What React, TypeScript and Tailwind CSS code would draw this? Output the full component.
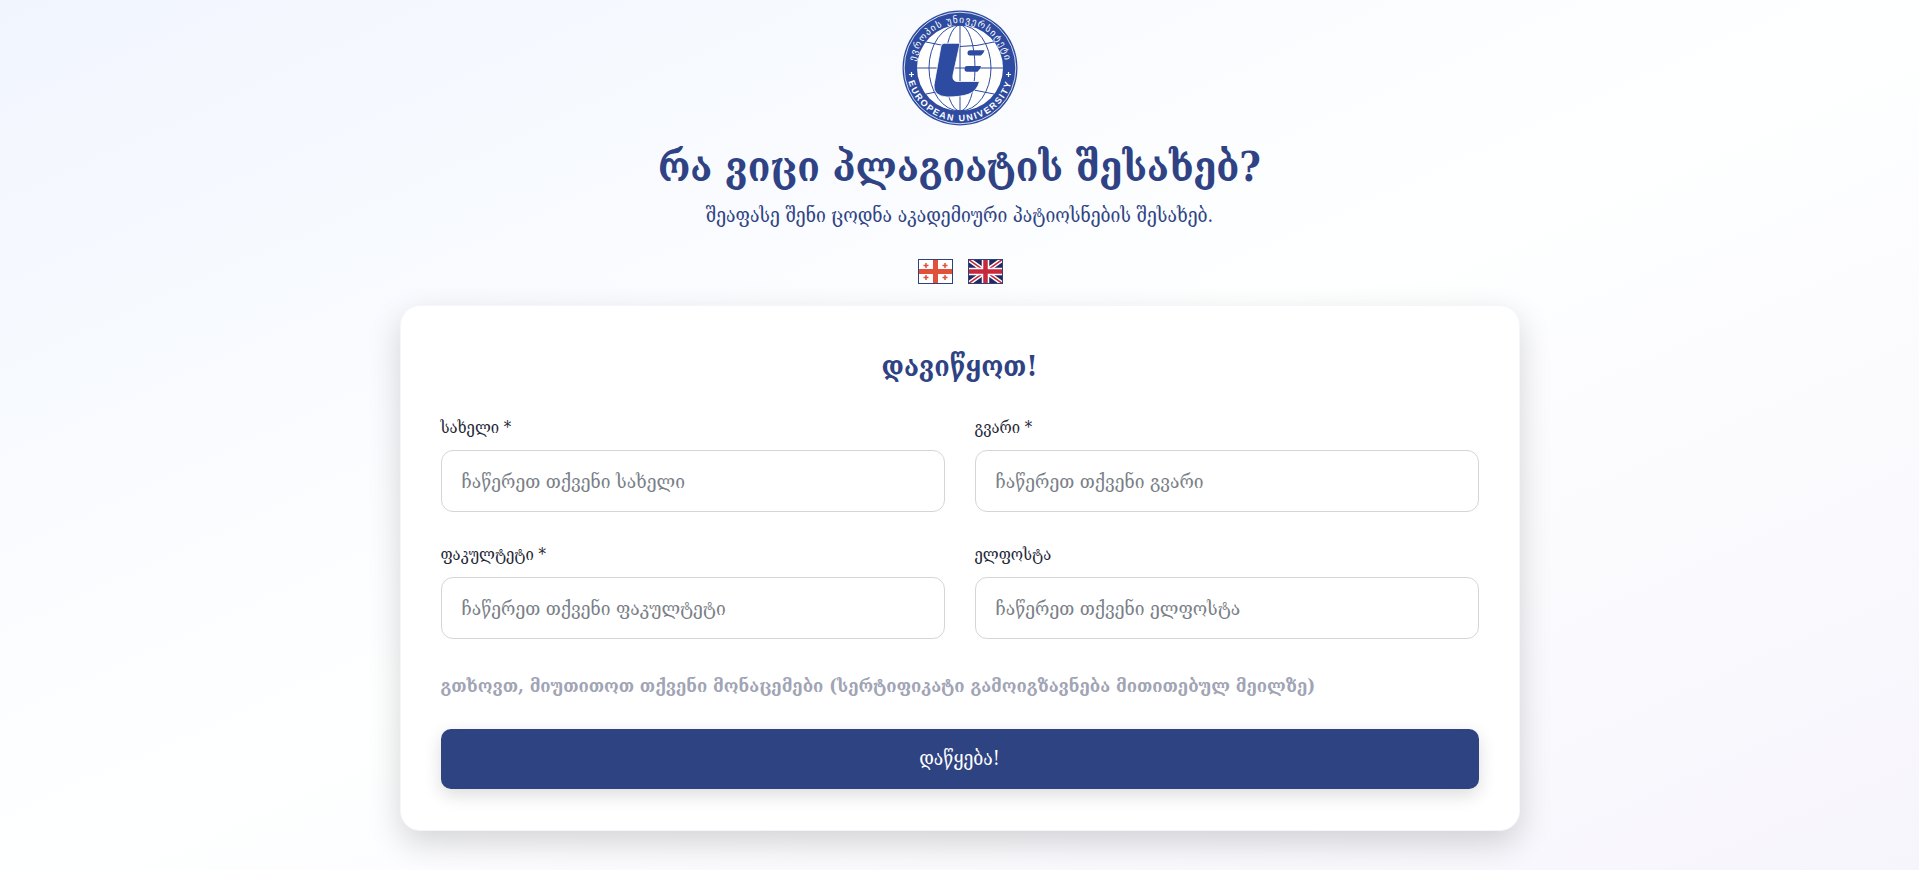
import React from 'react';

const stack = '[font-family:"DejaVu_Serif_Condensed","DejaVu_Serif",serif]';

const GeorgiaFlag = () => (
  <svg width="35" height="25" viewBox="0 0 35 25" className="block">
    <rect x="0.5" y="0.5" width="34" height="24" fill="#fff" stroke="#2f4279" />
    <rect x="15" y="1" width="5" height="23" fill="#e0503a" />
    <rect x="1" y="10" width="33" height="5" fill="#e0503a" />
    <path d="M8 4v5M5.5 6.5h5M27 4v5M24.5 6.5h5M8 16v5M5.5 18.5h5M27 16v5M24.5 18.5h5" stroke="#e0503a" strokeWidth="1.5" />
  </svg>
);

const UkFlag = () => (
  <svg width="35" height="25" viewBox="0 0 35 25" className="block">
    <rect width="35" height="25" fill="#1f2a63" />
    <path d="M0 0L35 25M35 0L0 25" stroke="#fff" strokeWidth="4.5" />
    <path d="M0 0L35 25M35 0L0 25" stroke="#c8283c" strokeWidth="1.5" />
    <path d="M17.5 0v25M0 12.5h35" stroke="#fff" strokeWidth="7.5" />
    <path d="M17.5 0v25M0 12.5h35" stroke="#c8283c" strokeWidth="4.5" />
    <rect x="0.5" y="0.5" width="34" height="24" fill="none" stroke="#2f4279" />
  </svg>
);

const Logo = () => (
  <svg width="118" height="118" viewBox="0 0 118 118" className="block">
    <defs>
      <path id="ring-top" d="M14 66A45.500 45.500 0 1 1 104 66" />
      <path id="ring-bottom" d="M6 66A53.500 53.500 0 0 0 112 66" />
    </defs>
    <circle cx="59" cy="59" r="57.5" fill="#2d4ba0" />
    <circle cx="59" cy="59" r="55.8" fill="none" stroke="#fff" strokeWidth="0.8" />
    <circle cx="59" cy="59" r="43" fill="#fff" />
    <g fill="none" stroke="#2d4ba0" strokeWidth="1">
      <ellipse cx="59" cy="59" rx="15" ry="43" />
      <ellipse cx="59" cy="59" rx="31" ry="43" />
      <path d="M59 16v86M16 59h86M25 33Q59 42 93 33M25 85Q59 76 93 85" />
    </g>
    <path d="M43 34.300H59L52 66Q51 72 56 72.500H78.500Q76 82 68 85Q60 88 46 88Q32 87 33 76L40 37Q41 34.300 43 34.300Z" fill="#2d4ba0" stroke="#fff" strokeWidth="0.8" />
    <path d="M69 41.300H83.500Q82.500 45 80 46.500H69Q66.500 46.500 66.500 44Q66.500 41.300 69 41.300Z" fill="#2d4ba0" />
    <path d="M66 57H80Q79 61 76.500 62.700H66Q63.500 62.700 63.500 60Q63.500 57 66 57Z" fill="#2d4ba0" />
    <text fontSize="9.5" fill="#fff" fontFamily="DejaVu Sans, sans-serif" letterSpacing="1.1">
      <textPath href="#ring-top" startOffset="50%" textAnchor="middle">ევროპის უნივერსიტეტი</textPath>
    </text>
    <text fontSize="9" fontWeight="700" fill="#fff" fontFamily="Liberation Sans, sans-serif" letterSpacing="1.7">
      <textPath href="#ring-bottom" startOffset="50%" textAnchor="middle">EUROPEAN UNIVERSITY</textPath>
    </text>
    <path d="M8 65.500h5M10.500 63v5M105 65.500h5M107.500 63v5" stroke="#fff" strokeWidth="1.2" />
  </svg>
);

const Field = ({ label, placeholder }: { label: string; placeholder: string }) => (
  <div className="flex flex-col">
    <label className="text-[16.5px] leading-6 text-[#1f2937] mb-[10px]">{label}</label>
    <input
      placeholder={placeholder}
      className="w-full h-[62px] rounded-[12px] border border-[#d4d5d9] bg-white px-5 text-[19.4px] outline-none placeholder:text-[#7a7f87]"
    />
  </div>
);

export default function App() {
  return (
    <div className={`min-h-screen bg-gradient-to-br from-[#f1f5fe] via-[#feffff] to-[#f7f5fc] flex flex-col items-center pt-[9px] ${stack}`}>
      <Logo />
      <h1 className="mt-[14px] text-[41px] leading-[52px] font-bold text-[#2f4384]">რა ვიცი პლაგიატის შესახებ?</h1>
      <p className="mt-[9px] text-[19.5px] leading-7 text-[#2f4384]">შეაფასე შენი ცოდნა აკადემიური პატიოსნების შესახებ.</p>
      <div className="mt-[29px] ml-[2px] flex gap-[15px]">
        <GeorgiaFlag />
        <UkFlag />
      </div>
      <div className="mt-[21px] w-[1120px] rounded-[20px] border border-[#f4f6fc] bg-white px-10 pt-[43px] pb-[41px] shadow-[0_12px_32px_rgba(0,0,0,0.16)]">
        <h2 className="text-center text-[28px] leading-9 font-bold text-[#2f4384]">დავიწყოთ!</h2>
        <div className="mt-[31px] grid grid-cols-2 gap-x-[30px] gap-y-[31px]">
          <Field label="სახელი *" placeholder="ჩაწერეთ თქვენი სახელი" />
          <Field label="გვარი *" placeholder="ჩაწერეთ თქვენი გვარი" />
          <Field label="ფაკულტეტი *" placeholder="ჩაწერეთ თქვენი ფაკულტეტი" />
          <Field label="ელფოსტა" placeholder="ჩაწერეთ თქვენი ელფოსტა" />
        </div>
        <p className="mt-[33px] text-[18.6px] leading-7 font-bold text-[#a0a4b4]">გთხოვთ, მიუთითოთ თქვენი მონაცემები (სერტიფიკატი გამოიგზავნება მითითებულ მეილზე)</p>
        <button className="mt-[29px] h-[60px] w-full rounded-[10px] bg-[#2e4382] text-[19.5px] text-white shadow-[0_6px_18px_rgba(0,0,0,0.14)]">დაწყება!</button>
      </div>
    </div>
  );
}
